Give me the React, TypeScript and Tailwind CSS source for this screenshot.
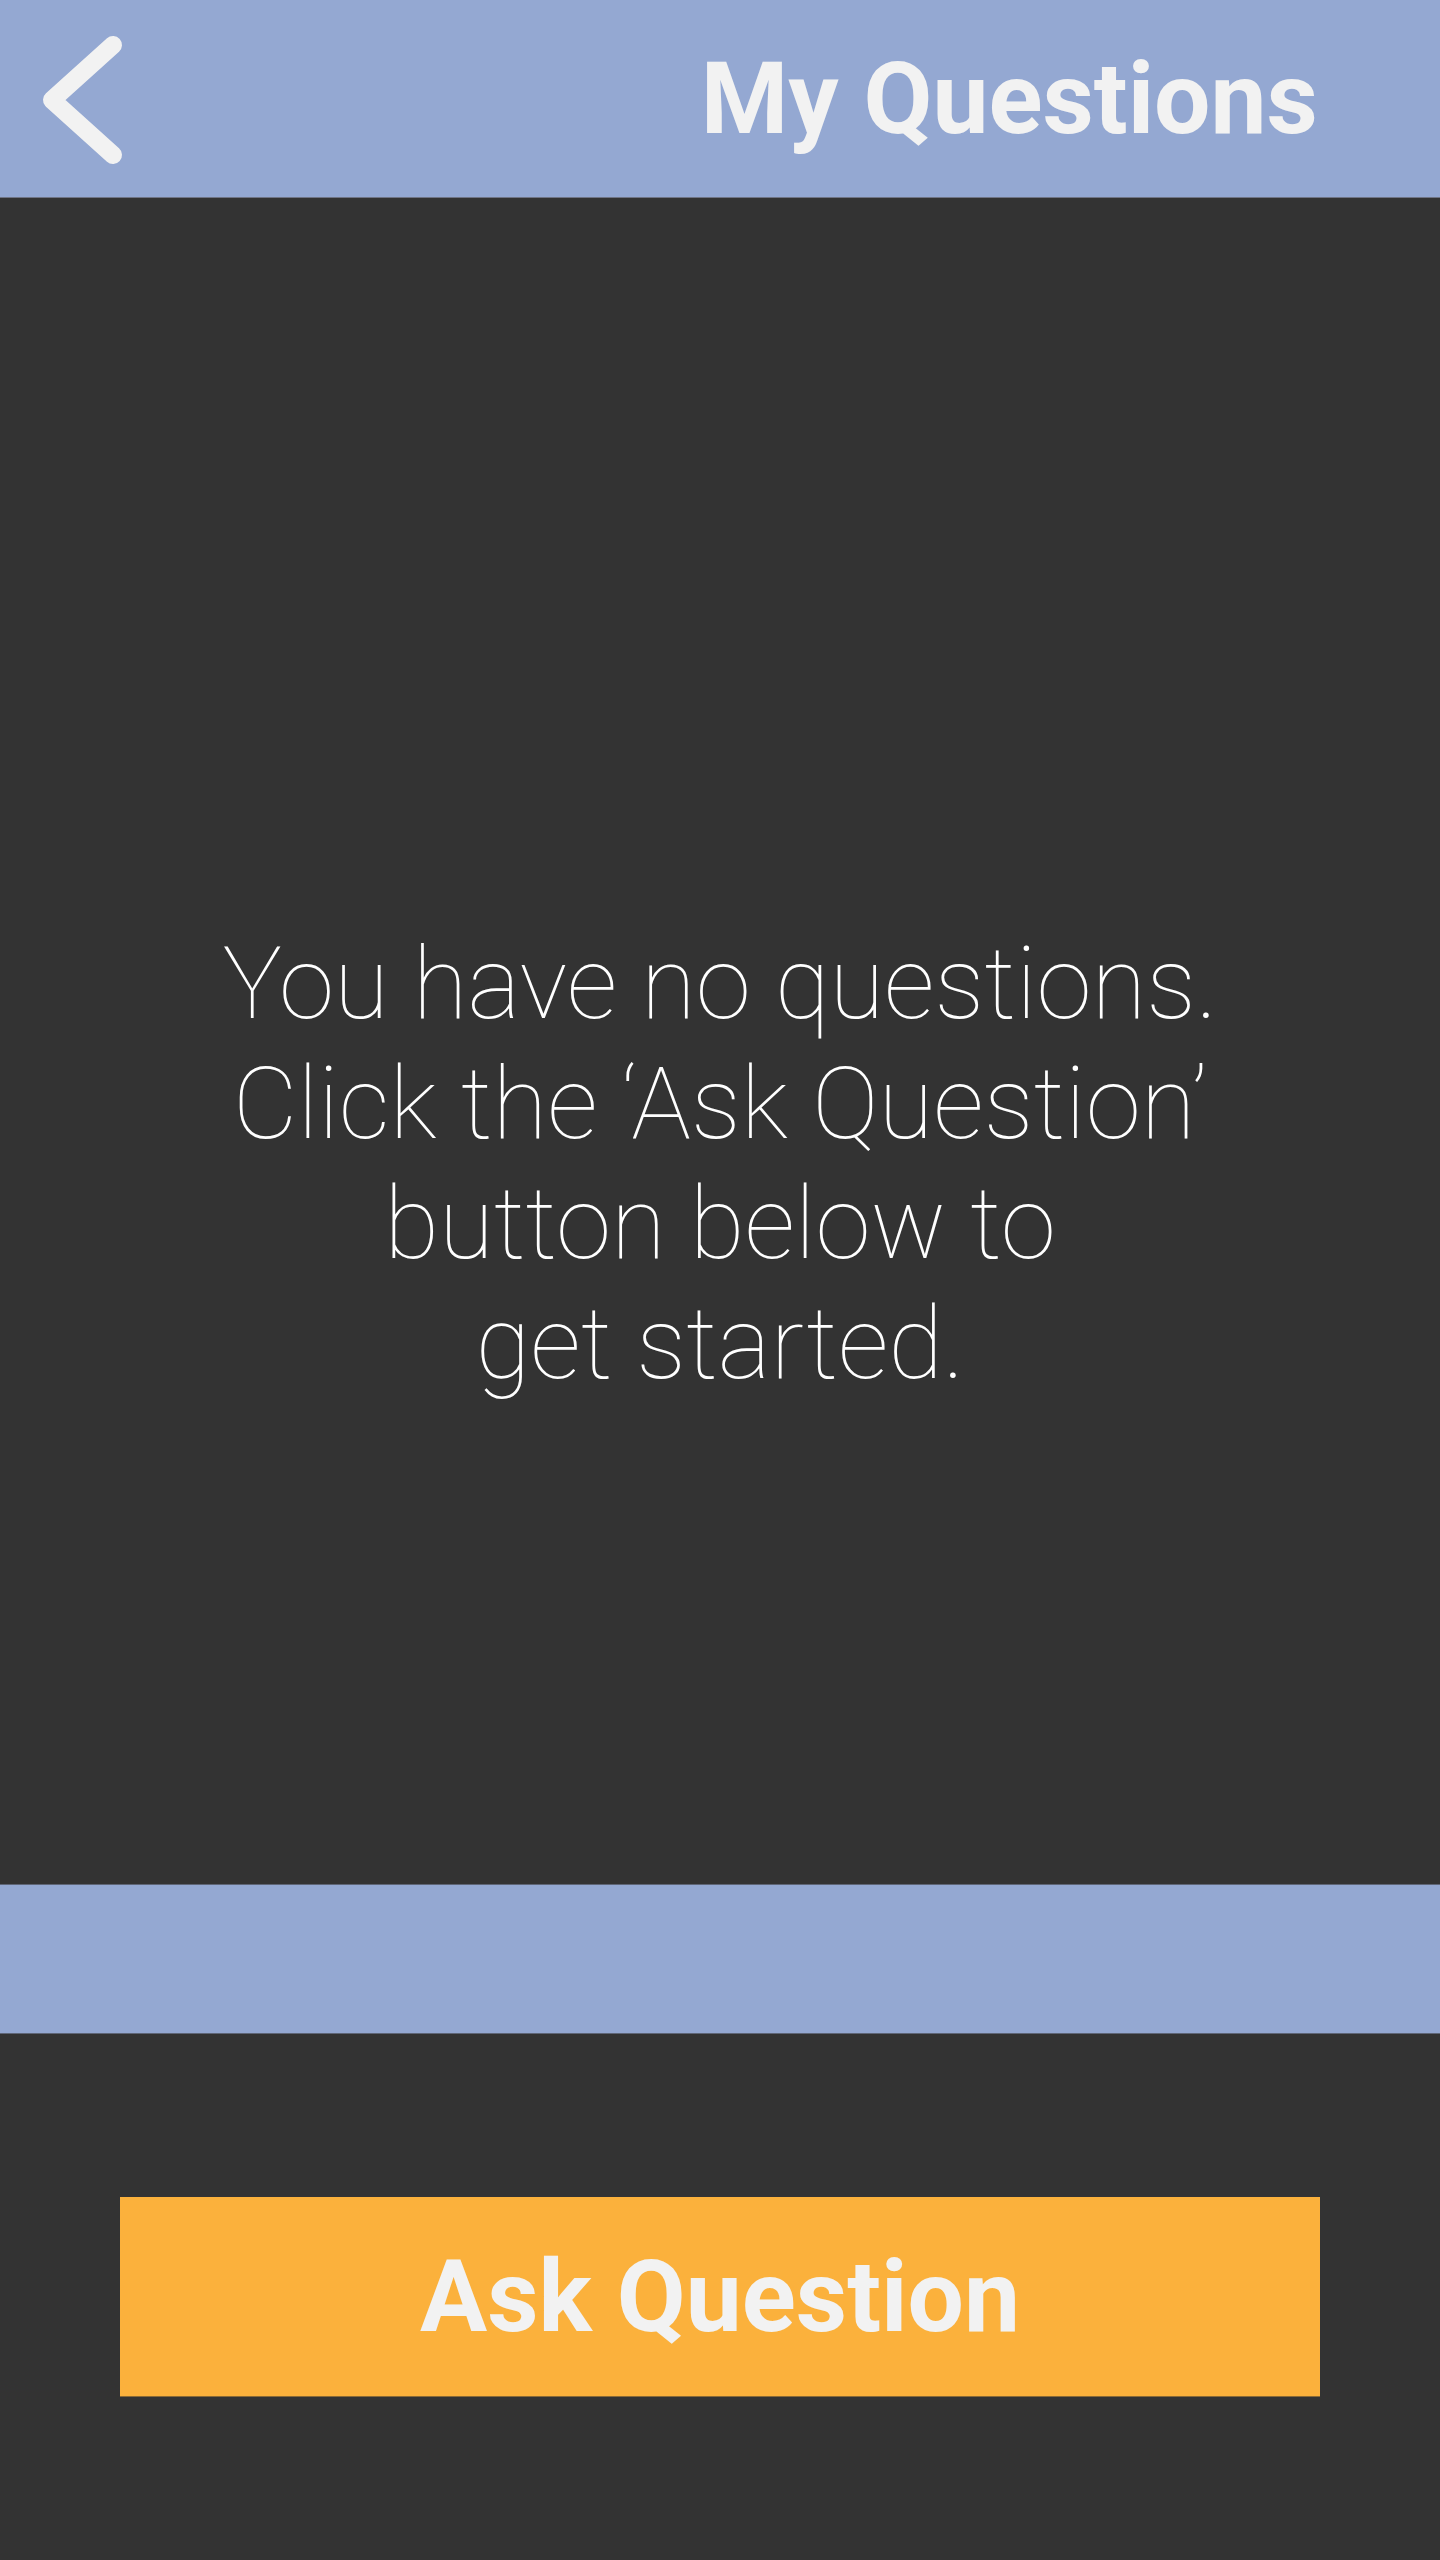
export default function App() {
  return (
    <div
      className="flex h-[2560px] w-full flex-col bg-[#333333]"
      style={{ fontFamily: "Roboto, 'Liberation Sans', sans-serif" }}
    >
      <header className="relative flex h-[198px] shrink-0 items-center justify-end border-b border-[#6f7485] bg-[#94a8d2] pr-[122px]">
        <button className="absolute left-0 top-0 h-[198px] w-[160px]" aria-label="Back">
          <svg width="160" height="198" viewBox="0 0 160 198" fill="none">
            <path
              d="M113 45 L52 100 L113 155"
              stroke="#f2f2f2"
              strokeWidth="18"
              strokeLinecap="round"
              strokeLinejoin="round"
            />
          </svg>
        </button>
        <h1 className="text-[100px] font-bold leading-none text-[#f2f2f2]">My Questions</h1>
      </header>

      <main className="h-[1686px] shrink-0 pt-[726px]">
        <p className="font-['Roboto_Thin',Roboto,sans-serif] text-center text-[100px] font-thin leading-[120px] text-white">
          You have no questions.
          <br />
          Click the ‘Ask Question’
          <br />
          button below to
          <br />
          get started.
        </p>
      </main>

      <div className="h-[150px] shrink-0 border-y border-[#5f6677] bg-[#94a8d2]" />

      <div className="flex flex-1 items-center justify-center">
        <button className="flex h-[200px] w-[1200px] items-center justify-center border-b border-[#8a6a36] bg-[#fbb13c] text-[100px] font-bold leading-none text-[#f2f2f2]">
          Ask Question
        </button>
      </div>
    </div>
  );
}
